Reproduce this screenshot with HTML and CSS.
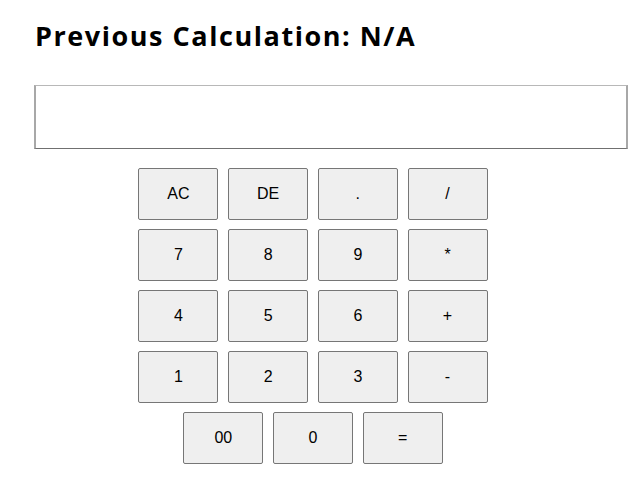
FILE: index.html
```html
<!DOCTYPE html>
<html>
<head>
<meta charset="utf-8">
<link rel="stylesheet" href="styles.css">
</head>
<body>
<div class="app">
  <h1 class="title">Previous Calculation: N/A</h1>
  <input class="display" type="text">
  <div class="keys">
    <div class="row">
      <button class="key">AC</button>
      <button class="key">DE</button>
      <button class="key">.</button>
      <button class="key">/</button>
    </div>
    <div class="row">
      <button class="key">7</button>
      <button class="key">8</button>
      <button class="key">9</button>
      <button class="key">*</button>
    </div>
    <div class="row">
      <button class="key">4</button>
      <button class="key">5</button>
      <button class="key">6</button>
      <button class="key">+</button>
    </div>
    <div class="row">
      <button class="key">1</button>
      <button class="key">2</button>
      <button class="key">3</button>
      <button class="key">-</button>
    </div>
    <div class="row">
      <button class="key">00</button>
      <button class="key">0</button>
      <button class="key">=</button>
    </div>
  </div>
</div>
</body>
</html>
```
FILE: styles.css
```css
html, body {
  margin: 0;
  padding: 0;
  background: #ffffff;
}
.app {
  padding: 21px 0 0 34px;
  width: 594px;
  display: flex;
  flex-direction: column;
}
.title {
  margin: 0 0 0 1px;
  font-family: "Open Sans", sans-serif;
  font-weight: 700;
  font-size: 27px;
  letter-spacing: 1.55px;
  line-height: 30px;
  color: #000;
}
.display {
  margin-top: 34px;
  box-sizing: border-box;
  width: 594px;
  height: 64px;
  border-top: 1px solid #b8b8b8;
  border-left: 2px solid #a8a8a8;
  border-right: 2px solid #a8a8a8;
  border-bottom: 1px solid #707070;
  background: #fff;
  padding: 0;
  outline: none;
}
.keys {
  margin-top: 19px;
  width: 558px;
  display: flex;
  flex-direction: column;
  gap: 9px;
}
.row {
  display: flex;
  justify-content: center;
  gap: 9.7px;
}
.key {
  box-sizing: border-box;
  width: 80px;
  height: 52px;
  margin: 0;
  padding: 0;
  background: #efefef;
  border: 1px solid #767676;
  border-radius: 2px;
  font-family: "Liberation Sans", Arial, sans-serif;
  font-size: 16px;
  color: #000;
}
```
